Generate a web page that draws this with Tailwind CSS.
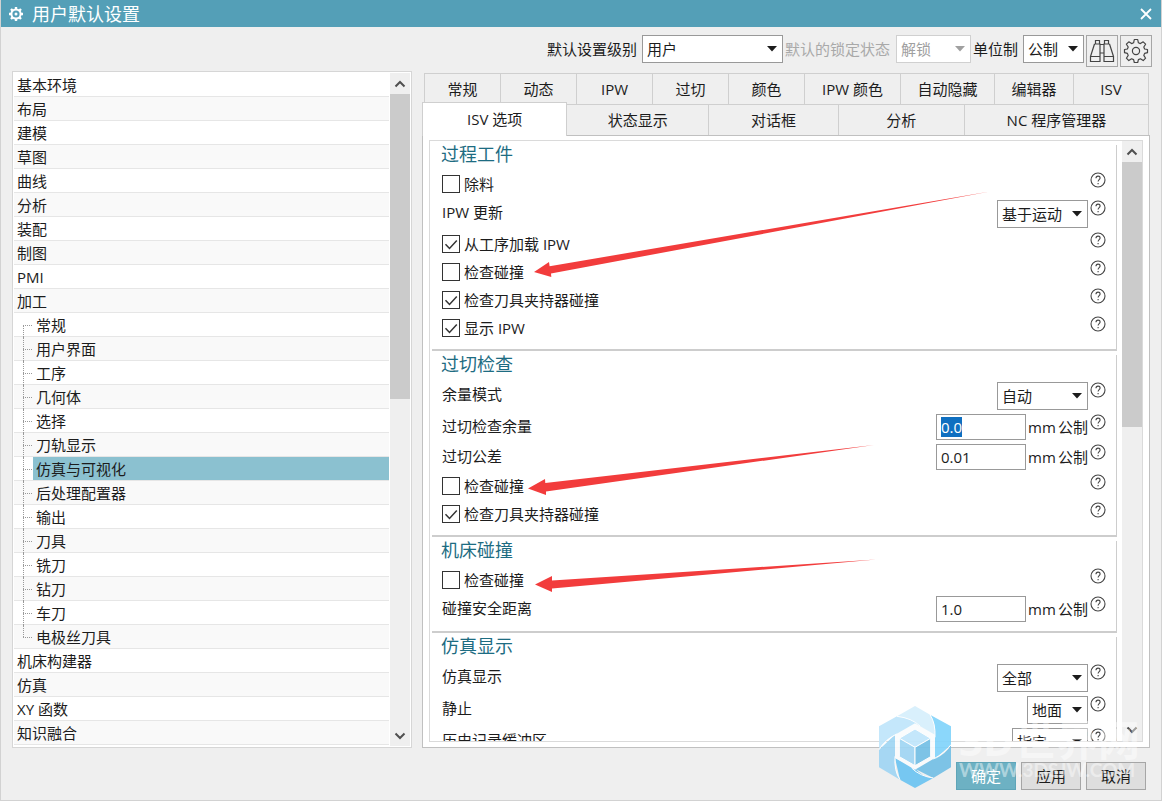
<!DOCTYPE html>
<html lang="zh-CN">
<head>
<meta charset="utf-8">
<title>用户默认设置</title>
<script src="https://cdn.jsdelivr.net/npm/@tailwindcss/browser@4"></script>
</head>
<body class="bg-[#efefef] font-['Open_Sans','Noto_Sans_CJK_SC',sans-serif] text-[15px] leading-5 text-[#1c1c1c]">
<svg class="hidden" aria-hidden="true">
  <symbol id="help" viewBox="0 0 16 16"><circle cx="8" cy="8" r="7" fill="none" stroke="#444" stroke-width="1.1"/><path d="M6 6.2c0-1.3.8-2.1 2-2.1s2.1.8 2.1 1.9c0 1.6-2 1.7-2 3.6M8.1 10.9v1.3" fill="none" stroke="#444" stroke-width="1.1"/></symbol>
  <symbol id="down" viewBox="0 0 10 6"><path d="M0 0h10L5 5.6z" fill="currentColor"/></symbol>
  <symbol id="tick" viewBox="0 0 18 18"><path d="M3.5 9.2l4 4.2L14.8 5.6" fill="none" stroke="#333" stroke-width="1.5"/></symbol>
  <symbol id="chev" viewBox="0 0 12 8"><path d="M1.5 6.5L6 2l4.500 4.500" fill="none" stroke="#505050" stroke-width="2"/></symbol>
</svg>
<div class="relative flex h-screen flex-col overflow-hidden border-x border-b border-[#d2d2d2]">
  <header class="flex h-[27px] shrink-0 items-center bg-[#549fb7] pl-[7px] pr-[9px] text-white">
    <svg class="mr-2 size-4" viewBox="0 0 16 16" aria-hidden="true"><circle cx="8" cy="8" r="4.600" fill="none" stroke="#fff" stroke-width="2"/><circle cx="8" cy="8" r="1.500" fill="#fff"/><path d="M8 1v2.500M8 12.500V15M1 8h2.500M12.500 8H15M3 3l1.800 1.800M11.200 11.200L13 13M13 3l-1.800 1.800M4.800 11.200L3 13" stroke="#fff" stroke-width="2.400"/></svg>
    <h1 class="text-lg leading-6">用户默认设置</h1>
    <button class="ml-auto" aria-label="关闭"><svg class="size-3" viewBox="0 0 12 12"><path d="M1 1l10 10M11 1L1 11" stroke="#fff" stroke-width="1.800"/></svg></button>
  </header>

  <div class="flex shrink-0 justify-end pr-[9px] pt-2">
    <div class="flex h-7 items-center">
      <label for="level" class="mr-[5px]">默认设置级别</label>
      <div class="relative mr-0.5"><select id="level" class="h-7 w-[141px] appearance-none border border-[#999] bg-white pl-1"><option>用户</option></select><svg class="pointer-events-none absolute right-1.5 top-[11px] h-1.5 w-2.5"><use href="#down"/></svg></div>
      <label for="lock" class="mr-1.5 text-[#a9a9a9]">默认的锁定状态</label>
      <div class="relative mr-0.5 text-[#a0a0a0]"><select id="lock" disabled class="h-7 w-[75px] appearance-none border border-[#d0d0d0] bg-white pl-1"><option>解锁</option></select><svg class="pointer-events-none absolute right-1.5 top-[11px] h-1.5 w-2.5"><use href="#down"/></svg></div>
      <label for="unit" class="mr-[5px]">单位制</label>
      <div class="relative"><select id="unit" class="h-7 w-[61px] appearance-none border border-[#999] bg-white pl-1"><option>公制</option></select><svg class="pointer-events-none absolute right-1.5 top-[11px] h-1.5 w-2.5"><use href="#down"/></svg></div>
    </div>
    <button class="ml-0.5 flex size-8 items-center justify-center border border-[#a6a6a6]" aria-label="查找"><svg class="size-[26px]" viewBox="0 0 26 26" fill="none" stroke="#444" stroke-width="1.200"><path d="M6.500 6V2.500h4V6M15.500 6V2.500h4V6M5.500 6h5.500v12.500M15 18.500V6h5.500M5.500 6L1.500 18.500M20.500 6l4 12.500M11 6.500h4M11 15h4M1.500 18.500h9.500v5H1.500zM15 18.500h9.500v5H15z"/></svg></button>
    <button class="ml-0.5 flex size-8 items-center justify-center border border-[#a6a6a6]" aria-label="设置"><svg class="size-[26px]" viewBox="0 0 26 26" fill="none" stroke="#444" stroke-width="1.200" stroke-linejoin="round"><circle cx="13" cy="13" r="3.600"/><path d="M11.300 1.500h3.400l.7 3.300 2 .8 2.800-1.800 2.400 2.400-1.800 2.800.8 2 2.900.5v3.200l-2.900.7-.8 2 1.800 2.800-2.400 2.400-2.800-1.800-2 .8-.7 2.900h-3.400l-.7-2.900-2-.8-2.800 1.800-2.400-2.400 1.800-2.800-.8-2-2.900-.7v-3.200l2.900-.5.8-2-1.800-2.800 2.400-2.400 2.800 1.800 2-.8z"/></svg></button>
  </div>

  <main class="flex min-h-0 flex-1 gap-2.5 pl-[11px] pr-[11px]">
    <nav class="mt-1 flex w-[400px] shrink-0 border border-[#d6d6d6] bg-white p-px">
      <ul role="tree" class="min-w-0 flex-1 [&>li:nth-child(even)]:bg-[#f9f9f9] [&>li>span]:flex [&>li>span]:h-6 [&>li>span]:items-center [&>li>span]:border-b [&>li>span]:border-[#e6e6e6] [&>li>span]:pl-[3px]">
        <li role="treeitem"><span>基本环境</span></li>
        <li role="treeitem"><span>布局</span></li>
        <li role="treeitem"><span>建模</span></li>
        <li role="treeitem"><span>草图</span></li>
        <li role="treeitem"><span>曲线</span></li>
        <li role="treeitem"><span>分析</span></li>
        <li role="treeitem"><span>装配</span></li>
        <li role="treeitem"><span>制图</span></li>
        <li role="treeitem"><span>PMI</span></li>
        <li role="treeitem"><span>加工</span>
          <ul role="group" class="[&>li]:relative [&>li]:flex [&>li]:h-6 [&>li]:border-b [&>li]:border-[#e6e6e6] [&>li]:bg-white [&>li]:pl-[19px] [&>li:nth-child(even)]:bg-[#f9f9f9] [&>li>span]:flex [&>li>span]:flex-1 [&>li>span]:items-center [&>li>span]:pl-[3px] [&>li]:before:absolute [&>li]:before:left-[9px] [&>li]:before:top-3 [&>li]:before:w-[9px] [&>li]:before:border-t [&>li]:before:border-dotted [&>li]:before:border-[#999] [&>li]:after:absolute [&>li]:after:left-[9px] [&>li]:after:top-0 [&>li]:after:h-6 [&>li]:after:border-l [&>li]:after:border-dotted [&>li]:after:border-[#999] [&>li:first-child]:after:top-3 [&>li:first-child]:after:h-3 [&>li:last-child]:after:h-3">
            <li role="treeitem"><span>常规</span></li>
            <li role="treeitem"><span>用户界面</span></li>
            <li role="treeitem"><span>工序</span></li>
            <li role="treeitem"><span>几何体</span></li>
            <li role="treeitem"><span>选择</span></li>
            <li role="treeitem"><span>刀轨显示</span></li>
            <li role="treeitem" aria-selected="true"><span class="bg-[#8bc1d0]">仿真与可视化</span></li>
            <li role="treeitem"><span>后处理配置器</span></li>
            <li role="treeitem"><span>输出</span></li>
            <li role="treeitem"><span>刀具</span></li>
            <li role="treeitem"><span>铣刀</span></li>
            <li role="treeitem"><span>钻刀</span></li>
            <li role="treeitem"><span>车刀</span></li>
            <li role="treeitem"><span>电极丝刀具</span></li>
          </ul>
        </li>
        <li role="treeitem"><span>机床构建器</span></li>
        <li role="treeitem"><span>仿真</span></li>
        <li role="treeitem"><span>XY 函数</span></li>
        <li role="treeitem"><span>知识融合</span></li>
      </ul>
      <div class="ml-px flex w-5 flex-col bg-[#efefef]">
        <button class="flex h-[21px] items-center justify-center" aria-label="向上"><svg class="h-2 w-3"><use href="#chev"/></svg></button>
        <div class="h-[305px] bg-[#cbcbcb]"></div>
        <button class="mt-auto flex h-[21px] items-center justify-center" aria-label="向下"><svg class="h-2 w-3 rotate-180"><use href="#chev"/></svg></button>
      </div>
    </nav>

    <section class="mt-1.5 flex min-w-0 flex-1 flex-col">
      <div role="tablist" class="shrink-0 pl-0.5 pr-px">
        <div class="flex h-[31px] border-l border-[#cfcfcf] [&>button]:grow [&>button]:border-r [&>button]:border-t [&>button]:border-[#cfcfcf]">
          <button role="tab" class="basis-[76px]">常规</button>
          <button role="tab" class="basis-[76px]">动态</button>
          <button role="tab" class="basis-[76px]">IPW</button>
          <button role="tab" class="basis-[76px]">过切</button>
          <button role="tab" class="basis-[76px]">颜色</button>
          <button role="tab" class="basis-24">IPW 颜色</button>
          <button role="tab" class="basis-[94px]">自动隐藏</button>
          <button role="tab" class="basis-[79px]">编辑器</button>
          <button role="tab" class="basis-[75px]">ISV</button>
        </div>
        <div class="-ml-0.5 flex h-[31px] [&>button]:grow [&>button]:border-r [&>button]:border-t [&>button]:border-[#cfcfcf]">
          <button role="tab" aria-selected="true" class="relative z-10 -mb-px -mt-0.5 basis-[145px] border-l bg-white pb-0.5">ISV 选项</button>
          <button role="tab" class="basis-[142px]">状态显示</button>
          <button role="tab" class="basis-[129px]">对话框</button>
          <button role="tab" class="basis-[126px]">分析</button>
          <button role="tab" class="basis-[184px]">NC 程序管理器</button>
        </div>
      </div>
      <div class="min-h-0 flex-1 border border-[#c0c0c0] bg-white px-1.5 pb-[5px] pt-1">
        <div class="flex h-full overflow-hidden border border-[#dadada]">
          <div class="min-w-0 flex-1 overflow-hidden pl-0.5 [&_.row]:flex [&_.row]:items-start [&_.row]:pl-2.5 [&_.row]:pr-[11px]
            [&_.row>label]:mr-auto [&_.row>label]:flex [&_.row>label]:h-7 [&_.row>label]:items-center
            [&_.row>button]:ml-0.5 [&_.row>button]:mt-0.5 [&_.row>button]:size-4
            [&_fieldset]:relative [&_fieldset]:border-b-2 [&_fieldset]:border-[#cdcdcd] [&_fieldset]:pb-[7px]
            [&_fieldset]:after:absolute [&_fieldset]:after:bottom-0 [&_fieldset]:after:right-0 [&_fieldset]:after:top-1 [&_fieldset]:after:border-r [&_fieldset]:after:border-[#cdcdcd]
            [&_h2]:h-[29px] [&_h2]:pl-[9px] [&_h2]:text-lg [&_h2]:leading-[26px] [&_h2]:text-[#1d6c82]
            [&_label>i]:relative [&_label>i]:mr-1 [&_label>i]:size-[18px]
            [&_input[type=checkbox]]:block [&_input[type=checkbox]]:size-[18px] [&_input[type=checkbox]]:appearance-none [&_input[type=checkbox]]:border [&_input[type=checkbox]]:border-[#333]
            [&_select]:h-7 [&_select]:appearance-none [&_select]:border [&_select]:border-[#999] [&_select]:bg-white [&_select]:pl-1
            [&_input[type=text]]:h-[26px] [&_input[type=text]]:w-[90px] [&_input[type=text]]:border [&_input[type=text]]:border-[#999] [&_input[type=text]]:pl-1 [&_input[type=text]]:outline-none">
            <fieldset><h2>过程工件</h2>
              <div class="row h-7"><label><i><input type="checkbox"></i>除料</label><button aria-label="帮助"><svg class="size-4"><use href="#help"/></svg></button></div>
              <div class="row h-8"><label for="ipw">IPW 更新</label><div class="relative mt-0.5"><select id="ipw" class="w-[91px]"><option>基于运动</option></select><svg class="pointer-events-none absolute right-1.5 top-[11px] h-1.5 w-2.5"><use href="#down"/></svg></div><button aria-label="帮助"><svg class="size-4"><use href="#help"/></svg></button></div>
              <div class="row h-7"><label><i><input type="checkbox" checked><svg class="pointer-events-none absolute inset-0 size-[18px]"><use href="#tick"/></svg></i>从工序加载 IPW</label><button aria-label="帮助"><svg class="size-4"><use href="#help"/></svg></button></div>
              <div class="row h-7"><label><i><input type="checkbox"></i>检查碰撞</label><button aria-label="帮助"><svg class="size-4"><use href="#help"/></svg></button></div>
              <div class="row h-7"><label><i><input type="checkbox" checked><svg class="pointer-events-none absolute inset-0 size-[18px]"><use href="#tick"/></svg></i>检查刀具夹持器碰撞</label><button aria-label="帮助"><svg class="size-4"><use href="#help"/></svg></button></div>
              <div class="row h-7"><label><i><input type="checkbox" checked><svg class="pointer-events-none absolute inset-0 size-[18px]"><use href="#tick"/></svg></i>显示 IPW</label><button aria-label="帮助"><svg class="size-4"><use href="#help"/></svg></button></div>
            </fieldset>
            <fieldset><h2>过切检查</h2>
              <div class="row h-8"><label for="mode">余量模式</label><div class="relative mt-0.5"><select id="mode" class="w-[91px]"><option>自动</option></select><svg class="pointer-events-none absolute right-1.5 top-[11px] h-1.5 w-2.5"><use href="#down"/></svg></div><button aria-label="帮助"><svg class="size-4"><use href="#help"/></svg></button></div>
              <div class="row h-[30px]"><label for="stock">过切检查余量</label><div class="mt-0.5 flex items-center"><input type="text" id="stock" value="0.0" autofocus class="mr-0.5 selection:bg-[#0f6fc0] selection:text-white"><span class="flex w-[60px] justify-between whitespace-nowrap"><span>mm</span><span>公制</span></span></div><button aria-label="帮助"><svg class="size-4"><use href="#help"/></svg></button></div>
              <div class="row h-[30px]"><label for="tol">过切公差</label><div class="mt-0.5 flex items-center"><input type="text" id="tol" value="0.01" class="mr-0.5"><span class="flex w-[60px] justify-between whitespace-nowrap"><span>mm</span><span>公制</span></span></div><button aria-label="帮助"><svg class="size-4"><use href="#help"/></svg></button></div>
              <div class="row h-7"><label><i><input type="checkbox"></i>检查碰撞</label><button aria-label="帮助"><svg class="size-4"><use href="#help"/></svg></button></div>
              <div class="row h-7"><label><i><input type="checkbox" checked><svg class="pointer-events-none absolute inset-0 size-[18px]"><use href="#tick"/></svg></i>检查刀具夹持器碰撞</label><button aria-label="帮助"><svg class="size-4"><use href="#help"/></svg></button></div>
            </fieldset>
            <fieldset><h2>机床碰撞</h2>
              <div class="row h-7"><label><i><input type="checkbox"></i>检查碰撞</label><button aria-label="帮助"><svg class="size-4"><use href="#help"/></svg></button></div>
              <div class="row h-[30px]"><label for="safe">碰撞安全距离</label><div class="mt-0.5 flex items-center"><input type="text" id="safe" value="1.0" class="mr-0.5"><span class="flex w-[60px] justify-between whitespace-nowrap"><span>mm</span><span>公制</span></span></div><button aria-label="帮助"><svg class="size-4"><use href="#help"/></svg></button></div>
            </fieldset>
            <fieldset><h2>仿真显示</h2>
              <div class="row h-8"><label for="sim">仿真显示</label><div class="relative mt-0.5"><select id="sim" class="w-[91px]"><option>全部</option></select><svg class="pointer-events-none absolute right-1.5 top-[11px] h-1.5 w-2.5"><use href="#down"/></svg></div><button aria-label="帮助"><svg class="size-4"><use href="#help"/></svg></button></div>
              <div class="row h-8"><label for="still">静止</label><div class="relative mt-0.5"><select id="still" class="w-[61px]"><option>地面</option></select><svg class="pointer-events-none absolute right-1.5 top-[11px] h-1.5 w-2.5"><use href="#down"/></svg></div><button aria-label="帮助"><svg class="size-4"><use href="#help"/></svg></button></div>
              <div class="row h-8"><label for="buf">历史记录缓冲区</label><div class="relative mt-0.5"><select id="buf" class="w-[76px]"><option>指定</option></select><svg class="pointer-events-none absolute right-1.5 top-[11px] h-1.5 w-2.5"><use href="#down"/></svg></div><button aria-label="帮助"><svg class="size-4"><use href="#help"/></svg></button></div>
            </fieldset>
          </div>
          <div class="ml-[5px] flex w-5 flex-col bg-[#efefef]">
            <button class="flex h-[21px] shrink-0 items-center justify-center" aria-label="向上"><svg class="h-2 w-3"><use href="#chev"/></svg></button>
            <div class="h-[265px] bg-[#cbcbcb]"></div>
            <button class="mt-auto flex h-[23px] items-center justify-center" aria-label="向下"><svg class="h-2 w-3 rotate-180"><use href="#chev"/></svg></button>
          </div>
        </div>
      </div>
    </section>
  </main>

  <footer class="flex shrink-0 justify-end gap-[5px] pb-2.5 pr-[15px] pt-[14px]">
    <button class="h-7 w-[60px] border border-[#5fa5b8] bg-[#6db1c3] text-white">确定</button>
    <button class="h-7 w-[60px] border border-[#a6a6a6] bg-[#dedede]">应用</button>
    <button class="h-7 w-[60px] border border-[#a6a6a6] bg-[#dedede]">取消</button>
  </footer>

  <!-- Callout arrows pointing at the three collision check boxes -->
  <svg class="pointer-events-none absolute left-[-1px] top-0 h-[801px] w-[1162px]" viewBox="0 0 1162 801" fill="#f23c3c" aria-hidden="true">
    <path d="M534 272l15-10 .6 4.200L990 191.500 551 273.500l.3 3.500z"/>
    <path d="M528 488.500l17-9.500.3 4L874 445 546 491.500v3.500z"/>
    <path d="M535 584.500l17-8.500v4.500L876 559.500 552 588.500v3.500z"/>
  </svg>

  <!-- Site watermark -->
  <svg class="pointer-events-none absolute bottom-1 right-[161px] h-[98px] w-[130px]" viewBox="0 0 390 294" aria-hidden="true">
    <g opacity=".92" stroke="#fff" stroke-width="3">
      <g stroke="none">
        <path fill="#d6effc" d="M81 55L135 24l45 26Q197 75 195 110L135 147Z"/>
        <path fill="#82d4fb" d="M180 50l63 35v55l-48 43-60-36 60-37Q197 75 180 50z"/>
        <path fill="#74c0e6" d="M243 140v68l-53 32-60-30 5-63 60 36Q230 165 243 140z"/>
        <path fill="#6cc4f2" d="M190 240l-55 30-45-25-15-65 60 30Q155 237 190 240z"/>
        <path fill="#a0d6f4" d="M90 245l-63-37v-53l48-45v70Q72 220 90 245z"/>
        <path fill="#bfe6fb" d="M27 155V85l54-30Q125 60 150 84L75 110Q45 125 27 155z"/>
      </g>
      <path fill="none" d="M81 55Q125 60 150 84M180 50Q197 75 195 118M243 140Q225 165 190 183M190 240Q150 235 125 210M90 245Q72 220 75 175M27 155Q45 125 80 108"/>
      <path fill="#fafcfd" stroke="none" d="M135 76l60 34v70l-60 35-60-35v-70z"/>
      <path fill="#bfe6fb" d="M88 121l47-28 47 28-47 27z"/>
      <path fill="#a0d6f4" d="M88 121l47 27v55l-47-27z"/>
      <path fill="#74c0e6" d="M182 121l-47 27v55l47-27z"/>
    </g>
  </svg>
  <div class="pointer-events-none absolute bottom-5 right-5 w-[182px] whitespace-nowrap text-white/45">
    <p class="text-[42px] font-bold leading-10">3D世界网</p>
    <p class="font-['Lato'] text-[19px] font-bold leading-5">WWW.3DSJW.COM</p>
  </div>
</div>
<script>
  const stock = document.getElementById('stock');
  stock.focus();
  stock.select();
</script>
</body>
</html>
